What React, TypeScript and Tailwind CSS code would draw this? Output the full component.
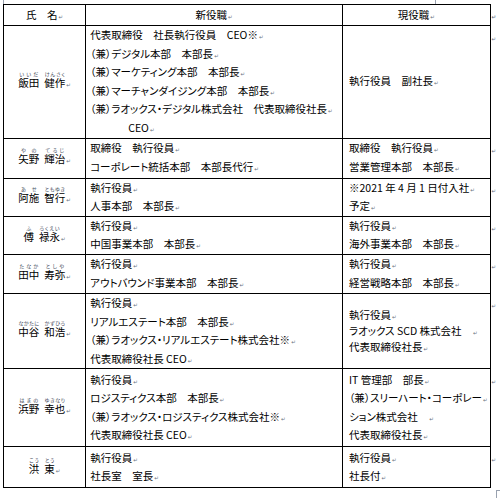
import React from "react";

type Row = {
  name: [string, string][];
  next: string[];
  current: string[];
  h: string;
  tight?: boolean;
};

// ">" prefix marks a continuation line with hanging indent
const rows: Row[] = [
  {
    name: [
      ["飯田", "いいだ"],
      ["健作", "けんさく"],
    ],
    next: [
      "代表取締役　社長執行役員　CEO※",
      "（兼）デジタル本部　本部長",
      "（兼）マーケティング本部　本部長",
      "（兼）マーチャンダイジング本部　本部長",
      "（兼）ラオックス・デジタル株式会社　代表取締役社長",
      ">CEO",
    ],
    current: ["執行役員　副社長"],
    h: "h-[112px]",
  },
  {
    name: [
      ["矢野", "やの"],
      ["輝治", "てるじ"],
    ],
    next: ["取締役　執行役員", "コーポレート統括本部　本部長代行"],
    current: ["取締役　執行役員", "営業管理本部　本部長"],
    h: "h-[40px]",
  },
  {
    name: [
      ["阿施", "あせ"],
      ["智行", "ともゆき"],
    ],
    next: ["執行役員", "人事本部　本部長"],
    current: ["※2021 年 4 月 1 日付入社", "予定"],
    h: "h-[37px]",
  },
  {
    name: [
      ["傅", "ふ"],
      ["禄永", "ろくえい"],
    ],
    next: ["執行役員", "中国事業本部　本部長"],
    current: ["執行役員", "海外事業本部　本部長"],
    h: "h-[37px]",
  },
  {
    name: [
      ["田中", "たなか"],
      ["寿弥", "としや"],
    ],
    next: ["執行役員", "アウトバウンド事業本部　本部長"],
    current: ["執行役員", "経営戦略本部　本部長"],
    h: "h-[39px]",
  },
  {
    name: [
      ["中谷", "なかたに"],
      ["和浩", "かずひろ"],
    ],
    next: [
      "執行役員",
      "リアルエステート本部　本部長",
      "（兼）ラオックス・リアルエステート株式会社※",
      "代表取締役社長 CEO",
    ],
    current: ["執行役員", "ラオックス SCD 株式会社　", "代表取締役社長"],
    h: "h-[75px]",
    tight: true,
  },
  {
    name: [
      ["浜野", "はまの"],
      ["幸也", "ゆきなり"],
    ],
    next: [
      "執行役員",
      "ロジスティクス本部　本部長",
      "（兼）ラオックス・ロジスティクス株式会社※",
      "代表取締役社長 CEO",
    ],
    current: [
      "IT 管理部　部長",
      "（兼）スリーハート・コーポレー",
      "ション株式会社　",
      "代表取締役社長",
    ],
    h: "h-[78px]",
  },
  {
    name: [
      ["洪", "こう"],
      ["東", "とう"],
    ],
    next: ["執行役員", "社長室　室長"],
    current: ["執行役員", "社長付"],
    h: "h-[41px]",
  },
];

// Word paragraph mark
function Mark() {
  return (
    <span className="ml-[1px] font-['DejaVu_Sans',sans-serif] text-[5.5px] leading-[0] text-gray-500">
      ↵
    </span>
  );
}

function Lines({ lines }: { lines: string[] }) {
  return (
    <>
      {lines.map((l, i) =>
        l.startsWith(">") ? (
          <div key={i} className="whitespace-nowrap pl-[38px]">
            {l.slice(1)}
            <Mark />
          </div>
        ) : (
          <div key={i} className="whitespace-nowrap">
            {l}
            <Mark />
          </div>
        ),
      )}
    </>
  );
}

export default function App() {
  return (
    <div className="relative h-[498px] w-[500px] overflow-hidden bg-white pl-[3px] pt-[4px] font-['Noto_Sans_CJK_JP',sans-serif] text-[10.5px] leading-[18.6px] text-black [font-feature-settings:'palt']">
      {/* page margin marks */}
      <div className="absolute left-[3px] top-0 h-[4px] w-px bg-gray-400" />
      <div className="absolute left-[435px] top-0 h-[4px] w-px bg-gray-400" />
      <div className="absolute left-[496px] top-[490px] h-px w-[4px] bg-gray-400" />
      <div className="absolute left-[496px] top-[490px] h-[8px] w-px bg-gray-400" />

      <table className="table-fixed border-collapse">
        <colgroup>
          <col className="w-[83px]" />
          <col className="w-[257px]" />
          <col className="w-[147px]" />
          <col className="w-[10px]" />
        </colgroup>
        <thead>
          <tr className="h-[21px]">
            <th className="border border-black p-0 text-center font-normal">
              氏　名
              <Mark />
            </th>
            <th className="border border-black p-0 text-center font-normal">
              新役職
              <Mark />
            </th>
            <th className="border border-black p-0 text-center font-normal">
              現役職
              <Mark />
            </th>
            <th className="p-0 text-left align-middle">
              <Mark />
            </th>
          </tr>
        </thead>
        <tbody>
          {rows.map((r, i) => (
            <tr key={i} className={r.h}>
              <td className="border border-black p-0 text-center align-middle">
                <span className="whitespace-nowrap">
                  {r.name.map(([kanji, kana], j) => (
                    <React.Fragment key={j}>
                      {j > 0 && <span className="inline-block w-[5px]" />}
                      <ruby>
                        {kanji}
                        <rt className="text-[5px] leading-[6px] text-gray-700">{kana}</rt>
                      </ruby>
                    </React.Fragment>
                  ))}
                  <Mark />
                </span>
              </td>
              <td className="border border-black py-0 pl-[4px] pr-[2px] align-middle">
                <Lines lines={r.next} />
              </td>
              <td
                className={
                  r.tight
                    ? "border border-black py-0 pl-[6px] pr-[2px] align-middle leading-[16px]"
                    : "border border-black py-0 pl-[6px] pr-[2px] align-middle"
                }
              >
                <Lines lines={r.current} />
              </td>
              <td className="p-0 pt-[2px] align-top">
                <Mark />
              </td>
            </tr>
          ))}
        </tbody>
      </table>
    </div>
  );
}
